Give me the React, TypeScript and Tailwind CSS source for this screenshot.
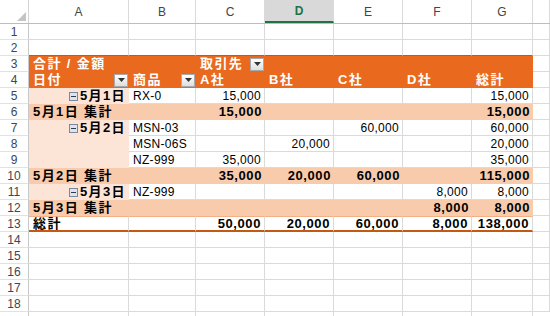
import React from 'react';

// Excel-style pivot table sheet
type Kind = 'grid' | 'top' | 'head' | 'peach' | 'sub' | 'total';

type CellDef = {
  t?: React.ReactNode;
  k: Kind;
  r?: boolean;
  b?: boolean;
  drop?: boolean;
  minus?: boolean;
};

const COLS = [100, 67, 69, 69, 69, 69, 61];
const LETTERS = ['A', 'B', 'C', 'D', 'E', 'F', 'G'];

const KIND_CLASS: Record<Kind, string> = {
  grid: 'bg-white border-r border-b border-[#dadada] text-black',
  top: 'bg-white border-r border-b border-r-[#dadada] border-b-[#c65911] text-black',
  head: 'bg-[#e96a1f] text-white',
  peach: 'bg-[#fce4d6] text-black',
  sub: 'bg-[#f8cbad] text-black',
  total:
    'bg-white border-r border-r-[#dadada] border-t border-t-[#f4b084] border-b-2 border-b-[#c65911] text-black',
};

const DropButton = () => (
  <span className="shrink-0 w-[14px] h-[13px] border border-[#a9a9a9] bg-gradient-to-b from-white to-[#dedede] flex items-center justify-center">
    <svg width="7" height="4" viewBox="0 0 7 4">
      <polygon points="0,0 7,0 3.5,4" fill="#333" />
    </svg>
  </span>
);

const MinusBox = () => (
  <svg width="9" height="9" viewBox="0 0 9 9" className="shrink-0 mr-[2px]">
    <rect x="0.5" y="0.5" width="8" height="8" fill="#dfe4ec" stroke="#7b879b" />
    <line x1="2" y1="4.5" x2="7" y2="4.5" stroke="#2f3b4f" strokeWidth="1" />
  </svg>
);

const Cell = ({ def, w }: { def: CellDef; w: number }) => {
  const isText = typeof def.t === 'string' && /[^\x00-\x7f]/.test(def.t as string);
  const size = isText
    ? 'text-[13px] tracking-[1.4px]'
    : def.b
      ? 'text-[13px] tracking-[0.6px]'
      : 'text-[12px] tracking-[0.3px]';
  return (
    <div className={`shrink-0 h-full ${KIND_CLASS[def.k]}`} style={{ width: w }}>
      <div
        className={`h-full flex items-center whitespace-nowrap leading-[14px] ${
          def.drop ? 'justify-between pl-[4px] pr-[1px]' : def.r ? 'justify-end pr-[3px]' : 'pl-[4px]'
        } ${def.b ? 'font-bold' : ''} ${size}`}
      >
        {def.minus && <MinusBox />}
        {def.t && <span>{def.t}</span>}
        {def.drop && <DropButton />}
      </div>
    </div>
  );
};

const e = (k: Kind = 'grid'): CellDef => ({ k });
const n = (t: string, k: Kind = 'grid', b = false): CellDef => ({ t, k, r: true, b });

const ROWS: CellDef[][] = [
  [e(), e(), e(), e(), e(), e(), e()],
  [e('top'), e('top'), e('top'), e('top'), e('top'), e('top'), e('top')],
  [
    { t: '合計 / 金額', k: 'head', b: true },
    e('head'),
    { t: '取引先', k: 'head', b: true, drop: true },
    e('head'),
    e('head'),
    e('head'),
    e('head'),
  ],
  [
    { t: '日付', k: 'head', b: true, drop: true },
    { t: '商品', k: 'head', b: true, drop: true },
    { t: 'A社', k: 'head', b: true },
    { t: 'B社', k: 'head', b: true },
    { t: 'C社', k: 'head', b: true },
    { t: 'D社', k: 'head', b: true },
    { t: '総計', k: 'head', b: true },
  ],
  [
    { t: '5月1日', k: 'peach', r: true, b: true, minus: true },
    { t: 'RX-0', k: 'grid' },
    n('15,000'),
    e(),
    e(),
    e(),
    n('15,000'),
  ],
  [
    { t: '5月1日 集計', k: 'sub', b: true },
    e('sub'),
    n('15,000', 'sub', true),
    e('sub'),
    e('sub'),
    e('sub'),
    n('15,000', 'sub', true),
  ],
  [
    { t: '5月2日', k: 'peach', r: true, b: true, minus: true },
    { t: 'MSN-03', k: 'grid' },
    e(),
    e(),
    n('60,000'),
    e(),
    n('60,000'),
  ],
  [e('peach'), { t: 'MSN-06S', k: 'grid' }, e(), n('20,000'), e(), e(), n('20,000')],
  [e('peach'), { t: 'NZ-999', k: 'grid' }, n('35,000'), e(), e(), e(), n('35,000')],
  [
    { t: '5月2日 集計', k: 'sub', b: true },
    e('sub'),
    n('35,000', 'sub', true),
    n('20,000', 'sub', true),
    n('60,000', 'sub', true),
    e('sub'),
    n('115,000', 'sub', true),
  ],
  [
    { t: '5月3日', k: 'peach', r: true, b: true, minus: true },
    { t: 'NZ-999', k: 'grid' },
    e(),
    e(),
    e(),
    n('8,000'),
    n('8,000'),
  ],
  [
    { t: '5月3日 集計', k: 'sub', b: true },
    e('sub'),
    e('sub'),
    e('sub'),
    e('sub'),
    n('8,000', 'sub', true),
    n('8,000', 'sub', true),
  ],
  [
    { t: '総計', k: 'total', b: true },
    e('total'),
    n('50,000', 'total', true),
    n('20,000', 'total', true),
    n('60,000', 'total', true),
    n('8,000', 'total', true),
    n('138,000', 'total', true),
  ],
];

const EMPTY_ROW: CellDef[] = [e(), e(), e(), e(), e(), e(), e()];
const ALL_ROWS = [...ROWS, ...Array.from({ length: 5 }, () => EMPTY_ROW)];

const App = () => {
  return (
    <div className="w-[550px] h-[316px] overflow-hidden bg-white font-['Liberation_Sans','Noto_Sans_CJK_JP',sans-serif]">
      {/* column headers */}
      <div className="flex h-[24px] border-b border-[#bdbdbd]">
        <div className="w-[29px] shrink-0 border-r border-[#d4d4d4] flex items-end justify-end pr-[2px] pb-[2px]">
          <svg width="9" height="9" viewBox="0 0 9 9">
            <polygon points="9,0 9,9 0,9" fill="#c4c4c4" />
          </svg>
        </div>
        {COLS.map((w, i) => {
          const sel = LETTERS[i] === 'D';
          return (
            <div
              key={i}
              className={`shrink-0 flex items-center justify-center text-[12px] border-r border-[#dadada] ${
                sel ? 'bg-[#d9d9d9] text-[#217346] border-b-2 border-b-[#217346] font-bold' : 'text-[#444]'
              }`}
              style={{ width: w }}
            >
              {LETTERS[i]}
            </div>
          );
        })}
        <div className="flex-1 border-r border-[#dadada]" />
      </div>

      {ALL_ROWS.map((row, ri) => (
        <div key={ri} className="flex h-[16px]">
          <div className="w-[29px] shrink-0 border-r border-r-[#c8c8c8] border-b border-b-[#e1e1e1] flex items-center justify-center text-[12px] text-[#3c4656]">
            {ri + 1}
          </div>
          {row.map((def, ci) => (
            <Cell key={ci} def={def} w={COLS[ci]} />
          ))}
          <div className="flex-1 border-r border-b border-[#dadada]" />
        </div>
      ))}

      {/* partially visible row 19, number hidden below the fold */}
      <div className="flex h-[16px]">
        <div className="w-[29px] shrink-0 border-r border-r-[#c8c8c8]" />
        {COLS.map((w, ci) => (
          <div key={ci} className="shrink-0 h-full border-r border-[#dadada]" style={{ width: w }} />
        ))}
      </div>
    </div>
  );
};

export default App;
